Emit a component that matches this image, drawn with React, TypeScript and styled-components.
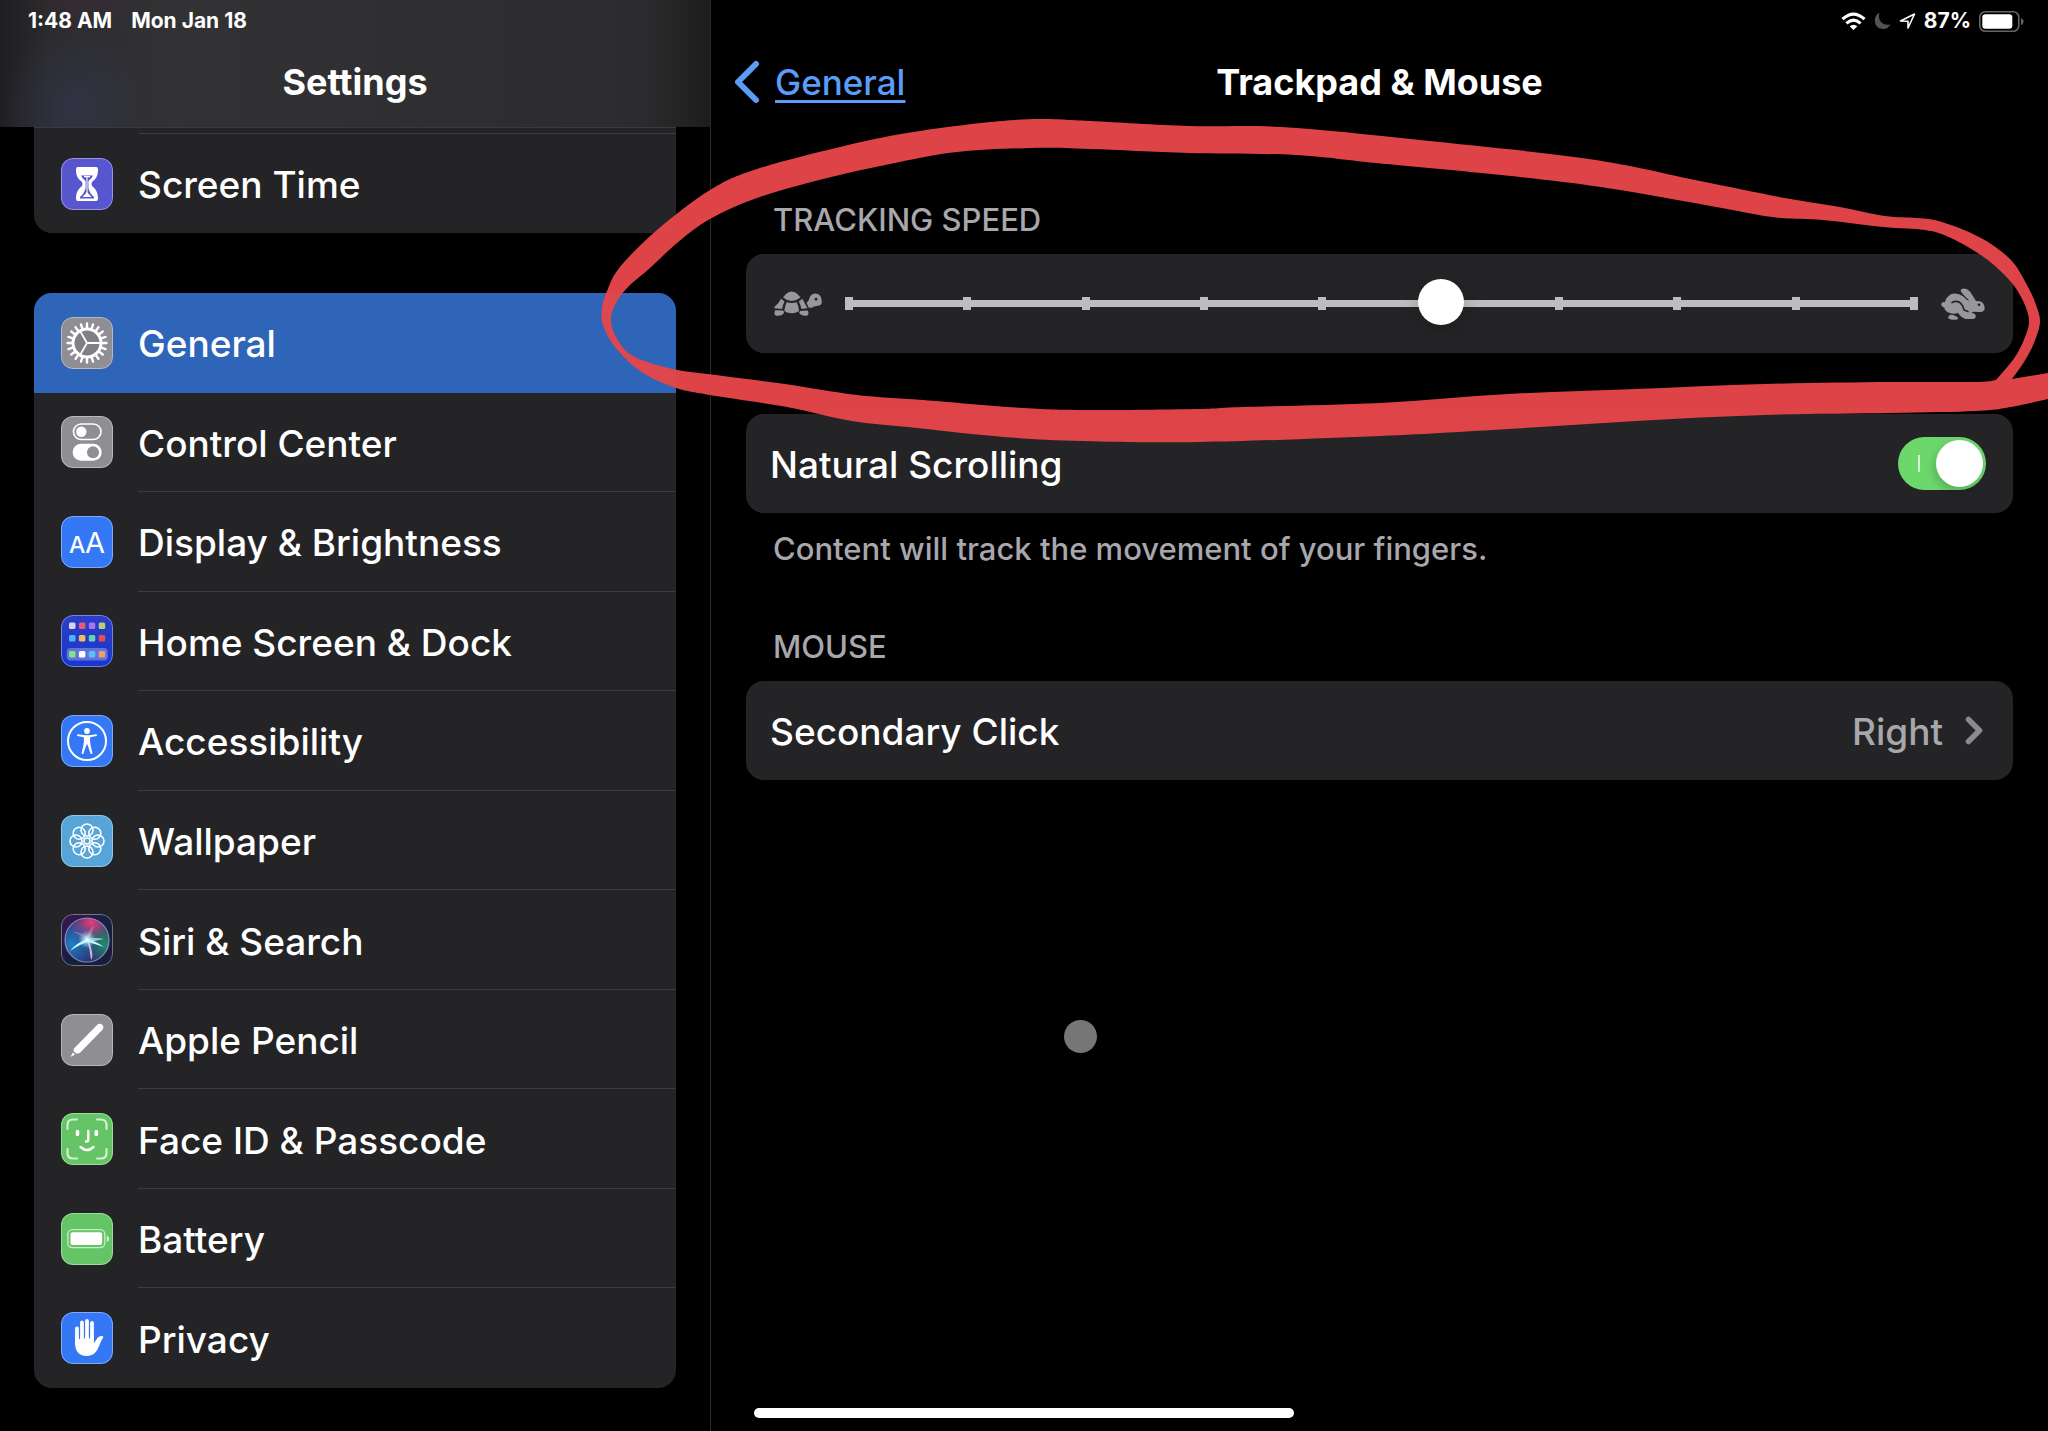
import React from "react";
import styled, { createGlobalStyle } from "styled-components";

const GlobalStyle = createGlobalStyle`
  *, *::before, *::after { box-sizing: border-box; }
  body {
    margin: 0;
    background: #000;
    color: #fff;
    font-family: Inter, Roboto, "Liberation Sans", sans-serif;
    -webkit-font-smoothing: antialiased;
  }
`;

const Screen = styled.div`
  position: relative;
  display: grid;
  grid-template-columns: 711px minmax(0, 1fr);
  min-height: 100vh;
  overflow: hidden;
`;

/* ---------- shared header parts ---------- */

const StatusBar = styled.div<{ $end?: boolean }>`
  display: flex;
  align-items: center;
  justify-content: ${(p) => (p.$end ? "flex-end" : "flex-start")};
  gap: ${(p) => (p.$end ? "8px" : "19px")};
  height: 42px;
  padding: 0 ${(p) => (p.$end ? "24px" : "28px")};
  font-size: 21px;
  line-height: 24px;
  font-weight: 650;
`;

const TitleRow = styled.div`
  display: grid;
  grid-template-columns: minmax(0, 1fr) auto minmax(0, 1fr);
  align-items: center;
  height: 80px;
  padding: 0 22px;
`;

const Title = styled.h1`
  grid-column: 2;
  margin: 0;
  font-size: 36px;
  line-height: 44px;
  font-weight: 700;
`;

/* ---------- sidebar ---------- */

const Sidebar = styled.aside`
  display: flex;
  flex-direction: column;
  border-right: 1px solid #2b2b2d;
  padding-bottom: 43px;
`;

const SidebarHeader = styled.header`
  height: 127px;
  background:
    radial-gradient(ellipse 75px 90px at 75px 112px, rgba(54, 54, 84, 0.6), transparent),
    radial-gradient(ellipse 60px 40px at 85px 0, rgba(70, 40, 60, 0.35), transparent),
    linear-gradient(to right, #1f1f21 0, #2b2b2d 50px, #323234 170px, #2f2f31 60%, #2c2c2e 640px, #1d1d1e 100%);
`;

const Group = styled.nav<{ $grow?: boolean }>`
  display: flex;
  flex-direction: column;
  flex: ${(p) => (p.$grow ? "1 0 auto" : "none")};
  margin: 0 34px ${(p) => (p.$grow ? "0" : "60px")};
  border-radius: ${(p) => (p.$grow ? "18px" : "0 0 18px 18px")};
  border-top: ${(p) => (p.$grow ? "none" : "1px solid #3a3a3c")};
  background: #242426;
  overflow: hidden;
`;

const HiddenRow = styled.div`
  height: 6px;
  margin-left: 105px;
  border-bottom: 1px solid #3d3d40;
`;

const NavRow = styled.a<{ $active?: boolean }>`
  display: flex;
  flex: 1 0 auto;
  align-items: center;
  gap: 25px;
  min-height: 99px;
  padding-left: 27px;
  color: #fff;
  text-decoration: none;
  background: ${(p) => (p.$active ? "#2e65b9" : "transparent")};
`;

const NavLabel = styled.span<{ $line?: boolean }>`
  display: flex;
  align-items: center;
  align-self: stretch;
  flex: 1;
  padding-top: 4px;
  border-bottom: 1px solid ${(p) => (p.$line ? "#3d3d40" : "transparent")};
  font-size: 37px;
  line-height: 44px;
  font-weight: 550;
`;

const Tile = styled.span<{ $bg: string }>`
  position: relative;
  flex: none;
  width: 52px;
  height: 52px;
  border-radius: 12px;
  background: ${(p) => p.$bg};
  overflow: hidden;

  svg { display: block; width: 52px; height: 52px; }

  &::after {
    content: "";
    position: absolute;
    inset: 0;
    border-radius: 12px;
    border: 1px solid rgba(255, 255, 255, 0.38);
  }
`;

/* ---------- detail pane ---------- */

const Detail = styled.main`
  min-width: 0;
`;

const DetailHeader = styled.header`
  height: 127px;
`;

const BackLink = styled.a`
  display: flex;
  align-items: center;
  gap: 14px;
  color: #5b9cf6;
  font-size: 35px;
  line-height: 44px;
  font-weight: 450;
  text-decoration: underline;
  text-decoration-thickness: 3px;
  text-underline-offset: 5px;
`;

const Content = styled.div`
  padding: 73px 35px 0;
`;

const Caption = styled.h2`
  margin: 0 0 14px;
  padding-left: 27px;
  color: #a7a7ac;
  font-size: 31px;
  line-height: 40px;
  font-weight: 550;
`;

const Footnote = styled.p`
  margin: 16px 0 58px;
  padding-left: 27px;
  color: #a7a7ac;
  font-size: 31px;
  line-height: 40px;
  font-weight: 550;
`;

const Card = styled.div`
  display: flex;
  align-items: center;
  min-height: 99px;
  padding: 0 28px;
  border-radius: 18px;
  background: #242426;
`;

const SpeedCard = styled(Card)`
  gap: 23px;
  margin-bottom: 61px;
`;

const SwitchCard = styled(Card).attrs({ as: "label" })`
  justify-content: space-between;
  padding: 0 27px 0 24px;
  font-size: 37px;
  line-height: 44px;
  font-weight: 550;
`;

const LinkCard = styled(Card).attrs({ as: "button" })`
  width: 100%;
  gap: 22px;
  padding: 0 30px 0 24px;
  border: 0;
  color: #fff;
  font-family: inherit;
  font-size: 37px;
  line-height: 44px;
  font-weight: 550;
  text-align: left;
`;

const CardLabel = styled.span`
  flex: 1;
  padding-top: 2px;
`;

const CardValue = styled.span`
  padding-top: 2px;
  color: #a7a7ac;
`;

const Slider = styled.div`
  display: grid;
  flex: 1;
  align-items: center;
  min-width: 0;
`;

const Ticks = styled.div`
  grid-area: 1 / 1;
  display: flex;
  justify-content: space-between;
  height: 13px;
  background: linear-gradient(#bdbdbf, #bdbdbf) center / 100% 7px no-repeat;
`;

const Tick = styled.span`
  width: 8px;
  background: #bdbdbf;
`;

const Range = styled.input`
  grid-area: 1 / 1;
  z-index: 1;
  width: calc(100% + 38px);
  height: 46px;
  margin: 0 -19px 4px;
  appearance: none;
  background: transparent;

  &::-webkit-slider-thumb {
    appearance: none;
    width: 46px;
    height: 46px;
    border: 0;
    border-radius: 50%;
    background: #fff;
    box-shadow: 0 6px 20px rgba(0, 0, 0, 0.2);
  }
`;

const Switch = styled.input`
  position: relative;
  width: 88px;
  height: 53px;
  margin: 0;
  appearance: none;
  border-radius: 27px;
  background: #6cd86c;

  &::before {
    content: "";
    position: absolute;
    left: 20px;
    top: 18px;
    width: 2px;
    height: 17px;
    background: #d5f5d5;
  }

  &::after {
    content: "";
    position: absolute;
    right: 3px;
    top: 3px;
    width: 47px;
    height: 47px;
    border-radius: 50%;
    background: #fff;
    box-shadow: -2px 4px 10px rgba(0, 0, 0, 0.2);
  }
`;

/* ---------- things floating above the page ---------- */

const Ink = styled.svg`
  position: absolute;
  top: 0;
  left: 0;
  width: 100%;
  z-index: 3;
  pointer-events: none;
`;

const Pointer = styled.div`
  position: absolute;
  left: 1064px;
  top: 1020px;
  width: 33px;
  height: 33px;
  border-radius: 50%;
  background: #767676;
`;

const HomeIndicator = styled.div`
  position: absolute;
  left: 50%;
  bottom: 13px;
  width: 540px;
  height: 10px;
  margin-left: -270px;
  border-radius: 5px;
  background: #fff;
`;

/* ---------- icons ---------- */

const ray = (r: number, deg: number, c = 26) => {
  const a = (deg * Math.PI) / 180;
  return [c + r * Math.cos(a), c + r * Math.sin(a)];
};

const HourglassIcon = () => (
  <svg viewBox="0 0 52 52">
    <path d="M17 9h18q2 0 2 2c0 6-1 9-6 13q-1 2 0 4c5 4 6 8 6 13q0 2-2 2H17q-2 0-2-2c0-5 1-9 6-13q1-2 0-4c-5-4-6-7-6-13q0-2 2-2z" fill="#fff" />
    <path d="M20 17.500h12q-1 3-4.600 5.500v7q1 5 5.600 9v1.500H19V39q4.600-4 5.600-9v-7Q21 20.500 20 17.500z" fill="#5856ce" />
    <path d="M23 18.600h6M26 19v16" stroke="#fff" strokeWidth="1.100" />
    <path d="M26 34l4.500 5h-9z" fill="#fff" />
  </svg>
);

const GearIcon = () => (
  <svg viewBox="0 0 52 52" fill="none" stroke="#fff">
    <circle cx="26" cy="26" r="14" fill="#7f7f84" strokeWidth="3" />
    {Array.from({ length: 20 }, (_, i) => {
      const [x1, y1] = ray(15, i * 18);
      const [x2, y2] = ray(19.5, i * 18);
      return <line key={i} x1={x1} y1={y1} x2={x2} y2={y2} strokeWidth="2.400" strokeLinecap="round" />;
    })}
    {[0, 120, 240].map((d) => {
      const [x, y] = ray(14, d);
      return <line key={d} x1="26" y1="26" x2={x} y2={y} strokeWidth="1.800" />;
    })}
  </svg>
);

const ControlIcon = () => (
  <svg viewBox="0 0 52 52">
    <rect x="12.500" y="8" width="27.500" height="15.500" rx="7.750" fill="none" stroke="#fff" strokeWidth="1.600" />
    <circle cx="20.300" cy="15.700" r="5.200" fill="#fff" />
    <rect x="11.700" y="27.700" width="29" height="17" rx="8.500" fill="#fff" />
    <circle cx="32" cy="36.200" r="6" fill="#8e8e93" />
  </svg>
);

const DisplayIcon = () => (
  <svg viewBox="0 0 52 52" fill="#fff" fontFamily="Inter, sans-serif">
    <text x="8" y="36.500" fontSize="23" fontWeight="500">A</text>
    <text x="24" y="36.500" fontSize="29" fontWeight="400">A</text>
  </svg>
);

const homeColors = [
  ["#d5d6ee", "#ea5a78", "#a974f5", "#b4d272"],
  ["#4fb2f7", "#f3bd58", "#66d3b4", "#e4504e"],
  ["#86e287", "#ffffff", "#5cc1f7", "#efa06a"],
];

const HomeIcon = () => (
  <svg viewBox="0 0 52 52">
    <rect x="5.700" y="33" width="41" height="12.500" rx="4" fill="rgba(255,255,255,0.3)" />
    {homeColors.map((row, r) =>
      row.map((c, i) => (
        <rect key={`${r}${i}`} x={8 + i * 9.9} y={[7.5, 20, 36][r]} width="6.500" height="6.500" rx="1.500" fill={c} />
      )),
    )}
  </svg>
);

const AccessibilityIcon = () => (
  <svg viewBox="0 0 52 52">
    <circle cx="26" cy="26" r="19" fill="none" stroke="#fff" strokeWidth="2" />
    <circle cx="26" cy="16" r="2.900" fill="#fff" />
    <path d="M16.500 19.300q-1.200.9 0 1.700l6.300 1.200q.6 4-.4 8L20.600 38q.2 1.500 1.700.9l3.300-9.400h.8l3.300 9.400q1.500.6 1.700-.9L29.600 30.200q-1-4-.4-8L35.500 21q1.200-.8 0-1.700L28 20.200h-4z" fill="#fff" />
  </svg>
);

const WallpaperIcon = () => (
  <svg viewBox="0 0 52 52" fill="none" stroke="#fff" strokeWidth="1.600">
    {Array.from({ length: 8 }, (_, i) => {
      const [x, y] = ray(11, i * 45);
      return <circle key={i} cx={x} cy={y} r="6" />;
    })}
    <circle cx="26" cy="26" r="3" />
  </svg>
);

const SiriIcon = () => (
  <svg viewBox="0 0 52 52">
    <defs>
      <radialGradient id="siriTop" cx="0.6" cy="0.1" r="0.55">
        <stop offset="0" stopColor="#e0407c" />
        <stop offset="1" stopColor="#e0407c" stopOpacity="0" />
      </radialGradient>
      <radialGradient id="siriLeft" cx="0.15" cy="0.6" r="0.6">
        <stop offset="0" stopColor="#1f7fc6" />
        <stop offset="1" stopColor="#1f7fc6" stopOpacity="0" />
      </radialGradient>
      <radialGradient id="siriRight" cx="0.9" cy="0.6" r="0.5">
        <stop offset="0" stopColor="#1f8c6c" />
        <stop offset="1" stopColor="#1f8c6c" stopOpacity="0" />
      </radialGradient>
      <radialGradient id="siriCore">
        <stop offset="0" stopColor="#fff" />
        <stop offset="0.35" stopColor="#bff6ff" stopOpacity="0.7" />
        <stop offset="1" stopColor="#7fe6ff" stopOpacity="0" />
      </radialGradient>
    </defs>
    <circle cx="26" cy="26" r="22" fill="#2b2a6e" />
    <circle cx="26" cy="26" r="22" fill="url(#siriTop)" />
    <circle cx="26" cy="26" r="22" fill="url(#siriLeft)" />
    <circle cx="26" cy="26" r="22" fill="url(#siriRight)" />
    <path d="M12 18q8-1 14 7 1-10 7-13-2 8-5 13z" fill="#e879c0" opacity="0.55" />
    <path d="M9 37q6-8 17-12 9 2 17 8-9-3-16-5-8 2-18 9z" fill="#c9fbff" />
    <path d="M26 26q3 9 4 20 2-3 1-8-1-7-4-12z" fill="#f2a6ea" />
    <path d="M24 14q1 7 2 11 8-2 17 0-8 2-17 3z" fill="#b8f5f2" opacity="0.7" />
    <circle cx="26" cy="25.500" r="9" fill="url(#siriCore)" />
    <circle cx="26" cy="26" r="22" fill="none" stroke="#a9a9d0" strokeWidth="1.200" opacity="0.75" />
  </svg>
);

const PencilIcon = () => (
  <svg viewBox="0 0 52 52">
    <path d="M35.800 11.200q2.600-2.600 5.200-.6 2.700 2.600.2 5.400L18.800 38.900 14.300 40l-2-2.400.9-3.300z" fill="#fff" />
    <path d="M12 38.300l2 2.300-4.600 2.300z" fill="#fff" />
    <path d="M11.300 37l4.300 3.800" stroke="#8e8e93" strokeWidth="1.200" />
  </svg>
);

const FaceIcon = () => (
  <svg viewBox="0 0 52 52" fill="none" stroke="#fff" strokeLinecap="round">
    <path d="M6.500 16v-4q0-5.500 5.500-5.500h4M36 6.500h4q5.500 0 5.500 5.500v4M45.500 36v4q0 5.500-5.500 5.500h-4M16 45.500h-4q-5.500 0-5.500-5.500v-4" strokeWidth="2.200" opacity="0.72" />
    <path d="M16.500 18.500v3M35.300 18.500v3" strokeWidth="3.600" />
    <path d="M27.300 18v8.500q0 2-2.300 2" strokeWidth="2.400" />
    <path d="M19.500 34q6.500 6 13 0" strokeWidth="2.400" />
  </svg>
);

const BatteryIcon = () => (
  <svg viewBox="0 0 52 52">
    <rect x="6.800" y="16.600" width="37" height="18" rx="4.500" fill="none" stroke="#fff" strokeWidth="1.300" opacity="0.65" />
    <rect x="9.500" y="19.300" width="31.600" height="12.600" rx="2" fill="#fff" />
    <path d="M45.800 22.500q2.400 1 2.400 3.200t-2.400 3.200z" fill="#fff" opacity="0.75" />
  </svg>
);

const HandIcon = () => (
  <svg viewBox="0 0 52 52">
    <path d="M16 16.500V32M21 10.500V28M26 9V28M31 11V28" stroke="#fff" strokeWidth="3.800" strokeLinecap="round" />
    <path d="M14.100 24h18.800v7.200l3.700-5.400q2.300-2.500 5.300-1.600.8.500 0 1.700-1.500 2-2.900 5.600C36.500 38.800 33.500 44 25.500 44 18 44 14.100 39 14.100 31z" fill="#fff" />
    <path d="M18.500 17v9.500M23.500 14v12M28.500 14v12" stroke="#3478f6" strokeWidth="1.100" strokeLinecap="round" />
  </svg>
);

const Chevron = styled.svg`
  flex: none;
  display: block;
  fill: none;
  stroke-linecap: round;
  stroke-linejoin: round;
`;

const Glyph = styled.svg`
  flex: none;
  display: block;
`;

const Turtle = () => (
  <Glyph width="48" height="26" viewBox="0 0 48 26" fill="#98989b" aria-hidden="true">
    <path d="M9 6.500Q13 .5 17.700.5T26.500 6.500Q22 10 17.700 10T9 6.500z" />
    <path d="M7 7.800l3.600 2.700q-1.800 3-2.400 7.200Q4 18 .3 17.300 0 16 1.600 14.800 5 12 7 7.800z" />
    <path d="M28.400 7.800l-3.600 2.700q1.800 3 2.400 7.200 3.400.3 6.300-.6Q31 13 28.400 7.800z" />
    <path d="M12.600 11.300q5 1.600 10.200 0 1.800 4 2.300 8.700-3.500 2.200-7.400 2.200T10.300 20q.5-4.700 2.300-8.700z" />
    <path d="M34.800 16.700l-2.300-5q2.200-1 3-4.700Q37 2.500 41.500 2.500q6.500.5 6.300 8.500 0 3.500-4.300 3.800-4 .3-5.800 2z" />
    <circle cx="42" cy="8.200" r="1.400" fill="#242426" />
    <path d="M1.200 19.300l7.600.3q1.700.8.900 2.700-1.700 2.500-6 2.500-3.200 0-3.200-2.600 0-2 .7-2.900z" />
    <path d="M26.300 20l7.200-.6q1 1 1 2.800 0 2.500-3.300 2.600-4.200-.1-5.800-2.500-.5-1.700.9-2.300z" />
  </Glyph>
);

const Rabbit = () => (
  <Glyph width="44" height="32" viewBox="0 0 44 32" fill="#98989b" aria-hidden="true">
    <path d="M20.500 1Q25-1 29 3.500l6 9.500q7-.5 8.300 5 .8 3-.3 4.500-1.500 1.700-5 1.500l-5.500-.3-2.500 1.300 2.500.2q2.500 1 2.300 3.600-.3 2.200-3 2.200h-7.300q-4.500-1.500-7.500-6-4.500 1.500-9-.3Q3.500 23 3.300 19.600 0 18.700.2 16q.6-2.400 3.600-1.800Q6.500 6.200 13 5.600q5-.3 9 2.700l4 3.700 2.300.5Q23 8 20.200 4q-1-2 .3-3z" />
    <path d="M9.500 26.700q4.800-.2 7.800 3.500-.5 1.500-3.300 1.500-4.500.2-6.500-1.200-.9-2.700 2-3.800z" />
    <path d="M11 14.500q5.500-2.500 8.800.8 3 3.200 3.200 6.700l4 1.500" fill="none" stroke="#242426" strokeWidth="1.700" strokeLinecap="round" />
    <circle cx="38" cy="16.800" r="1.300" fill="#242426" />
  </Glyph>
);

const WifiIcon = () => (
  <Glyph width="25" height="19" viewBox="0 0 25 19" fill="none" stroke="#fff" strokeWidth="3.200">
    <path d="M1.500 7.200q11-10.200 22 0" />
    <path d="M5.400 11.400q7.100-6.400 14.200 0" />
    <path d="M8.600 14.300q3.900-3.300 7.800 0L12.500 18z" fill="#fff" stroke="none" />
  </Glyph>
);

const MoonIcon = () => (
  <Glyph width="17" height="18" viewBox="0 0 17 18" fill="#535353">
    <path d="M5.500.8Q.8 3 .8 8.700q.4 7.800 8.200 8.300 5.400 0 7.600-4.700Q11 14 7.200 10.200 3.800 6.200 5.500.8z" />
  </Glyph>
);

const LocationIcon = () => (
  <Glyph width="17" height="18" viewBox="0 0 17 18" fill="none" stroke="#fff" strokeWidth="1.600" strokeLinejoin="round">
    <path d="M15.500 2L9 16V9.300L1.500 9z" />
  </Glyph>
);

const StatusBattery = () => (
  <Glyph width="45" height="21" viewBox="0 0 45 21">
    <rect x="0.800" y="0.800" width="39" height="19.400" rx="5.500" fill="none" stroke="#646464" strokeWidth="1.600" />
    <rect x="3.300" y="3.300" width="30" height="14.400" rx="3" fill="#fff" />
    <path d="M42 7q2.600 1 2.600 3.500T42 14z" fill="#646464" />
  </Glyph>
);

/* ---------- hand-drawn ring ---------- */

type Pt = [number, number];

/* Each run is a smooth curve; the runs meet in sharp corners. */
const curve = (pts: Pt[]) =>
  pts
    .slice(0, -1)
    .map((p, i) => {
      const a = pts[i - 1] ?? p;
      const b = pts[i + 1];
      const c = pts[i + 2] ?? b;
      return `C${p[0] + (b[0] - a[0]) / 6} ${p[1] + (b[1] - a[1]) / 6} ${b[0] - (c[0] - p[0]) / 6} ${b[1] - (c[1] - p[1]) / 6} ${b[0]} ${b[1]}`;
    })
    .join("");

const outerEdge: Pt[] = [
  [2012, 379], [2024, 362], [2034, 343], [2040, 322], [2036, 305], [2028, 287], [2011, 260], [1981, 238], [1942, 222],
  [1917, 218], [1885, 216], [1840, 207], [1785, 198], [1700, 181], [1589, 159], [1420, 140], [1282, 127],
  [1189, 126], [1090, 121], [1040, 119], [990, 122], [907, 133], [840, 147], [757, 169], [710, 190],
  [657, 230], [620, 267], [607, 291], [602, 308], [603, 325], [615, 347], [640, 371], [673, 387], [710, 395], [787, 407],
  [852, 421], [917, 428], [1004, 437], [1082, 441], [1199, 442], [1380, 436], [1508, 429], [1636, 421],
  [1764, 415], [1891, 413], [1976, 411], [2011, 407], [2048, 399],
];

const innerEdge: Pt[] = [
  [1996, 380], [2015, 357], [2025, 337], [2029, 321], [2024, 303], [2011, 282], [1985, 258], [1951, 238],
  [1925, 230], [1883, 227], [1823, 220], [1772, 217], [1700, 204], [1601, 187], [1501, 175], [1376, 163],
  [1295, 155], [1189, 153], [1090, 149], [1032, 148], [957, 152], [890, 164], [823, 179], [757, 198],
  [710, 219], [677, 243], [650, 268], [627, 288], [615, 305], [611, 320], [616, 337], [633, 356], [673, 369],
  [723, 376], [785, 384], [857, 395], [923, 400], [1023, 408], [1090, 410], [1199, 409], [1242, 407],
  [1380, 403], [1508, 394], [1636, 389], [1764, 384], [1891, 382], [1976, 382], [1996, 380],
];

const ringPath = `M2048 373L2012 379${curve(outerEdge)}ZM1996 380${curve(innerEdge)}Z`;

/* ---------- data ---------- */

const items = [
  { label: "General", bg: "#8e8e93", Icon: GearIcon },
  { label: "Control Center", bg: "#8e8e93", Icon: ControlIcon },
  { label: "Display & Brightness", bg: "#3478f6", Icon: DisplayIcon },
  { label: "Home Screen & Dock", bg: "linear-gradient(#2a3fc4, #1a36cf)", Icon: HomeIcon },
  { label: "Accessibility", bg: "#3478f6", Icon: AccessibilityIcon },
  { label: "Wallpaper", bg: "#56a4d8", Icon: WallpaperIcon },
  { label: "Siri & Search", bg: "linear-gradient(135deg, #3a1552, #14203f 55%, #1c1c3c)", Icon: SiriIcon },
  { label: "Apple Pencil", bg: "#8e8e93", Icon: PencilIcon },
  { label: "Face ID & Passcode", bg: "#65c466", Icon: FaceIcon },
  { label: "Battery", bg: "#65c466", Icon: BatteryIcon },
  { label: "Privacy", bg: "#3478f6", Icon: HandIcon },
];

export default function App() {
  return (
    <>
      <GlobalStyle />
      <Screen>
        <Sidebar>
          <SidebarHeader>
            <StatusBar>
              <span>1:48 AM</span>
              <span>Mon Jan 18</span>
            </StatusBar>
            <TitleRow>
              <Title>Settings</Title>
            </TitleRow>
          </SidebarHeader>
          <Group>
            <HiddenRow />
            <NavRow href="#screen-time">
              <Tile $bg="#5856ce"><HourglassIcon /></Tile>
              <NavLabel>Screen Time</NavLabel>
            </NavRow>
          </Group>
          <Group $grow>
            {items.map(({ label, bg, Icon }, i) => (
              <NavRow key={label} href={`#${label}`} $active={i === 0} aria-current={i === 0 ? "page" : undefined}>
                <Tile $bg={bg}><Icon /></Tile>
                <NavLabel $line={i > 0 && i < items.length - 1}>{label}</NavLabel>
              </NavRow>
            ))}
          </Group>
        </Sidebar>

        <Detail>
          <DetailHeader>
            <StatusBar $end>
              <WifiIcon />
              <MoonIcon />
              <LocationIcon />
              <span>87%</span>
              <StatusBattery />
            </StatusBar>
            <TitleRow>
              <BackLink href="#general">
                <Chevron width="28" height="44" viewBox="0 0 28 44" stroke="#5b9cf6" strokeWidth="6">
                  <path d="M23 4L5 22l18 18" />
                </Chevron>
                General
              </BackLink>
              <Title>Trackpad &amp; Mouse</Title>
            </TitleRow>
          </DetailHeader>

          <Content>
            <Caption id="speed">TRACKING SPEED</Caption>
            <SpeedCard>
              <Turtle />
              <Slider>
                <Ticks>
                  {Array.from({ length: 10 }, (_, i) => <Tick key={i} />)}
                </Ticks>
                <Range type="range" min={0} max={9} step={1} defaultValue={5} aria-labelledby="speed" />
              </Slider>
              <Rabbit />
            </SpeedCard>

            <SwitchCard>
              <CardLabel>Natural Scrolling</CardLabel>
              <Switch type="checkbox" role="switch" defaultChecked />
            </SwitchCard>
            <Footnote>Content will track the movement of your fingers.</Footnote>

            <Caption>MOUSE</Caption>
            <LinkCard>
              <CardLabel>Secondary Click</CardLabel>
              <CardValue>Right</CardValue>
              <Chevron width="18" height="29" viewBox="0 0 18 29" stroke="#8b8b8f" strokeWidth="5.500">
                <path d="M3.500 3.500l11 11-11 11" />
              </Chevron>
            </LinkCard>
          </Content>
        </Detail>

        <Pointer />
        <HomeIndicator />
        <Ink viewBox="0 0 2048 1431" aria-hidden="true">
          <path d={ringPath} fill="#e6464a" fillOpacity="0.96" fillRule="evenodd" />
        </Ink>
      </Screen>
    </>
  );
}
